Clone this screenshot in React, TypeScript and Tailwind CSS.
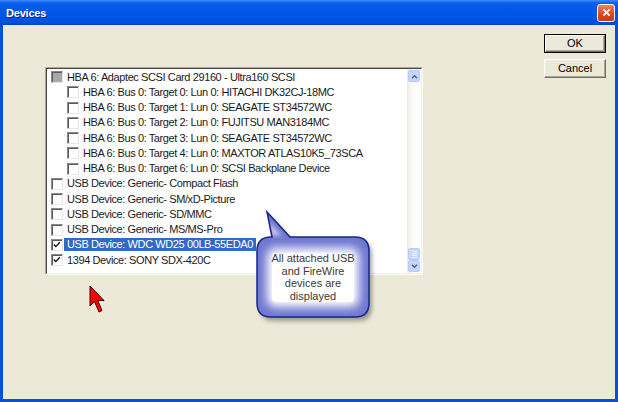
import React from "react";

type Row = {
  label: string;
  indent?: boolean;
  state?: "off" | "on" | "gray";
  selected?: boolean;
};

const rows: Row[] = [
  { label: "HBA 6: Adaptec SCSI Card 29160 - Ultra160 SCSI", state: "gray" },
  { label: "HBA 6: Bus 0: Target 0: Lun 0: HITACHI DK32CJ-18MC", indent: true },
  { label: "HBA 6: Bus 0: Target 1: Lun 0: SEAGATE ST34572WC", indent: true },
  { label: "HBA 6: Bus 0: Target 2: Lun 0: FUJITSU MAN3184MC", indent: true },
  { label: "HBA 6: Bus 0: Target 3: Lun 0: SEAGATE ST34572WC", indent: true },
  { label: "HBA 6: Bus 0: Target 4: Lun 0: MAXTOR ATLAS10K5_73SCA", indent: true },
  { label: "HBA 6: Bus 0: Target 6: Lun 0: SCSI Backplane Device", indent: true },
  { label: "USB Device: Generic- Compact Flash" },
  { label: "USB Device: Generic- SM/xD-Picture" },
  { label: "USB Device: Generic- SD/MMC" },
  { label: "USB Device: Generic- MS/MS-Pro" },
  { label: "USB Device: WDC WD25 00LB-55EDA0", state: "on", selected: true },
  { label: "1394 Device: SONY SDX-420C", state: "on" },
];

const Checkbox = ({ state = "off" }: { state?: Row["state"] }) => (
  <div
    className={`relative h-[12px] w-[12px] shrink-0 border border-t-[#8a8a8a] border-l-[#8a8a8a] border-r-[#e8e6dc] border-b-[#e8e6dc] shadow-[inset_1px_1px_0_#5a5a5a] ${
      state === "gray" ? "bg-[#a8a8a8]" : "bg-white"
    }`}
  >
    {state === "on" && (
      <svg viewBox="0 0 10 10" className="absolute left-[1px] top-[1px] h-[8px] w-[8px]">
        <path d="M1 4.5 L3.5 7 L8.5 1.5" fill="none" stroke="#111" strokeWidth="1.7" />
      </svg>
    )}
  </div>
);

const ScrollButton = ({ up }: { up?: boolean }) => (
  <div className="flex h-[12px] w-[12px] items-center justify-center rounded-[2px] border border-[#b7cbf6] bg-[#c5d5fc]">
    <svg viewBox="0 0 8 6" className="h-[5px] w-[7px]">
      <path
        d={up ? "M1 5 L4 2 L7 5" : "M1 1 L4 4 L7 1"}
        fill="none"
        stroke="#4d6185"
        strokeWidth="1.6"
      />
    </svg>
  </div>
);

const XpButton = ({ label, isDefault }: { label: string; isDefault?: boolean }) => (
  <div
    className={`flex h-[19px] w-[62px] items-center justify-center text-[11px] text-black ${
      isDefault ? "border border-black" : ""
    }`}
  >
    <div className="flex h-full w-full items-center justify-center border border-t-white border-l-white border-r-[#716f64] border-b-[#716f64] bg-[#ece9d8] shadow-[inset_-1px_-1px_0_#aca899]">
      {label}
    </div>
  </div>
);

export default function App() {
  return (
    <div
      className="relative flex h-[402px] w-[618px] flex-col overflow-hidden bg-[#0a4fdb]"
      style={{ fontFamily: '"Liberation Sans", Arial, sans-serif' }}
    >
      {/* Title bar */}
      <div className="flex h-[25px] shrink-0 items-center justify-between bg-[linear-gradient(to_bottom,#3d8cff_0%,#0a5fee_12%,#0056e6_50%,#0052e0_88%,#0044c8_100%)] pl-[6px] pr-[3px]">
        <span className="pt-[2px] text-[11px] font-bold tracking-[-0.2px] text-white [text-shadow:1px_1px_0_#0a2a8a]">
          Devices
        </span>
        <div className="flex h-[18px] w-[18px] items-center justify-center rounded-[3px] border border-white bg-[linear-gradient(to_bottom,#f0825f,#d8471f_60%,#c23c18)]">
          <svg viewBox="0 0 10 10" className="h-[9px] w-[9px]">
            <path d="M1.5 1.5 L8.5 8.5 M8.5 1.5 L1.5 8.5" stroke="white" strokeWidth="2" />
          </svg>
        </div>
      </div>

      {/* Body */}
      <div className="mx-[3px] mb-[3px] flex flex-1 items-start bg-[#ece9d8]">
        {/* Device list */}
        <div className="ml-[42px] mt-[42px] h-[208px] w-[378px] border border-t-[#aca899] border-l-[#aca899] border-r-white border-b-white">
          <div className="flex h-full w-full border border-t-[#4a4a44] border-l-[#4a4a44] border-r-[#f1efe2] border-b-[#f1efe2] bg-white">
            <div className="flex-1 pt-[0.5px] text-[11px] tracking-[-0.4px] text-[#1a1a1a]">
              {rows.map((r, i) => (
                <div
                  key={i}
                  className={`flex h-[15.25px] items-center ${r.indent ? "pl-[20px]" : "pl-[4px]"}`}
                >
                  <Checkbox state={r.state} />
                  <span
                    className={`ml-[1px] whitespace-nowrap pl-[3px] pr-[3px] leading-[11px] ${
                      r.selected ? "bg-[#316ac5] py-[1px] text-white" : ""
                    }`}
                  >
                    {r.label}
                  </span>
                </div>
              ))}
            </div>
            {/* Scrollbar */}
            <div className="flex w-[14px] flex-col border-l border-[#eeede5] bg-[linear-gradient(to_right,#f3efe9,#fcfcf9_40%,#fefefe)] pb-[1px] pt-[1px]">
              <ScrollButton up />
              <div className="flex-1" />
              <div className="flex h-[12px] w-[12px] flex-col items-center justify-center gap-[1px] rounded-[2px] border border-[#b7cbf6] bg-[#c8d8fc]">
                <div className="h-px w-[5px] bg-[#eef3ff]" />
                <div className="h-px w-[5px] bg-[#eef3ff]" />
                <div className="h-px w-[5px] bg-[#eef3ff]" />
                <div className="h-px w-[5px] bg-[#eef3ff]" />
              </div>
              <ScrollButton />
            </div>
          </div>
        </div>

        {/* Buttons */}
        <div className="ml-auto mr-[9px] mt-[9px] flex flex-col gap-[6px]">
          <XpButton label="OK" isDefault />
          <XpButton label="Cancel" />
        </div>
      </div>

      {/* Callout */}
      <svg className="absolute left-[250px] top-[205px]" width="130" height="125" viewBox="0 0 130 125">
        <defs>
          <clipPath id="bubble">
            <path d="M22 32 L17 7 L40 32 L105 32 Q119 32 119 46 L119 98 Q119 112 105 112 L21 112 Q7 112 7 98 L7 46 Q7 32 21 32 Z" />
          </clipPath>
          <filter id="soft" x="-20%" y="-20%" width="140%" height="140%">
            <feGaussianBlur stdDeviation="5" />
          </filter>
          <filter id="shade" x="-20%" y="-20%" width="140%" height="140%">
            <feGaussianBlur stdDeviation="2" />
          </filter>
        </defs>
        <path
          d="M22 32 L17 7 L40 32 L105 32 Q119 32 119 46 L119 98 Q119 112 105 112 L21 112 Q7 112 7 98 L7 46 Q7 32 21 32 Z"
          transform="translate(3 4)"
          fill="#000"
          opacity="0.35"
          filter="url(#shade)"
        />
        <g clipPath="url(#bubble)">
          <rect x="0" y="0" width="130" height="125" fill="#6f77d0" />
          <rect x="17" y="43" width="92" height="59" rx="8" fill="#fff" filter="url(#soft)" />
          <rect x="22" y="48" width="82" height="49" rx="4" fill="#fff" />
          <path d="M21 30 L19 17 L32 31 Z" fill="#c9ccf0" filter="url(#shade)" />
        </g>
        <path
          d="M22 32 L17 7 L40 32 L105 32 Q119 32 119 46 L119 98 Q119 112 105 112 L21 112 Q7 112 7 98 L7 46 Q7 32 21 32 Z"
          fill="none"
          stroke="#18248c"
          strokeWidth="1.5"
        />
      </svg>
      <div className="absolute left-[257px] top-[237px] flex h-[80px] w-[112px] items-center justify-center text-center text-[11px] leading-[12.5px] text-[#3a3a3a]">
        <div>
          All attached USB
          <br />
          and FireWire
          <br />
          devices are
          <br />
          displayed
        </div>
      </div>

      {/* Cursor */}
      <svg className="absolute left-[89px] top-[285px]" width="18" height="30" viewBox="0 0 18 30">
        <path
          d="M1 1 L1 21 L5.5 16.5 L10 27 L13 25.5 L8.8 15.5 L15 15.5 Z"
          fill="#ff0000"
          stroke="#3a0000"
          strokeWidth="1"
          strokeLinejoin="miter"
        />
      </svg>
    </div>
  );
}
